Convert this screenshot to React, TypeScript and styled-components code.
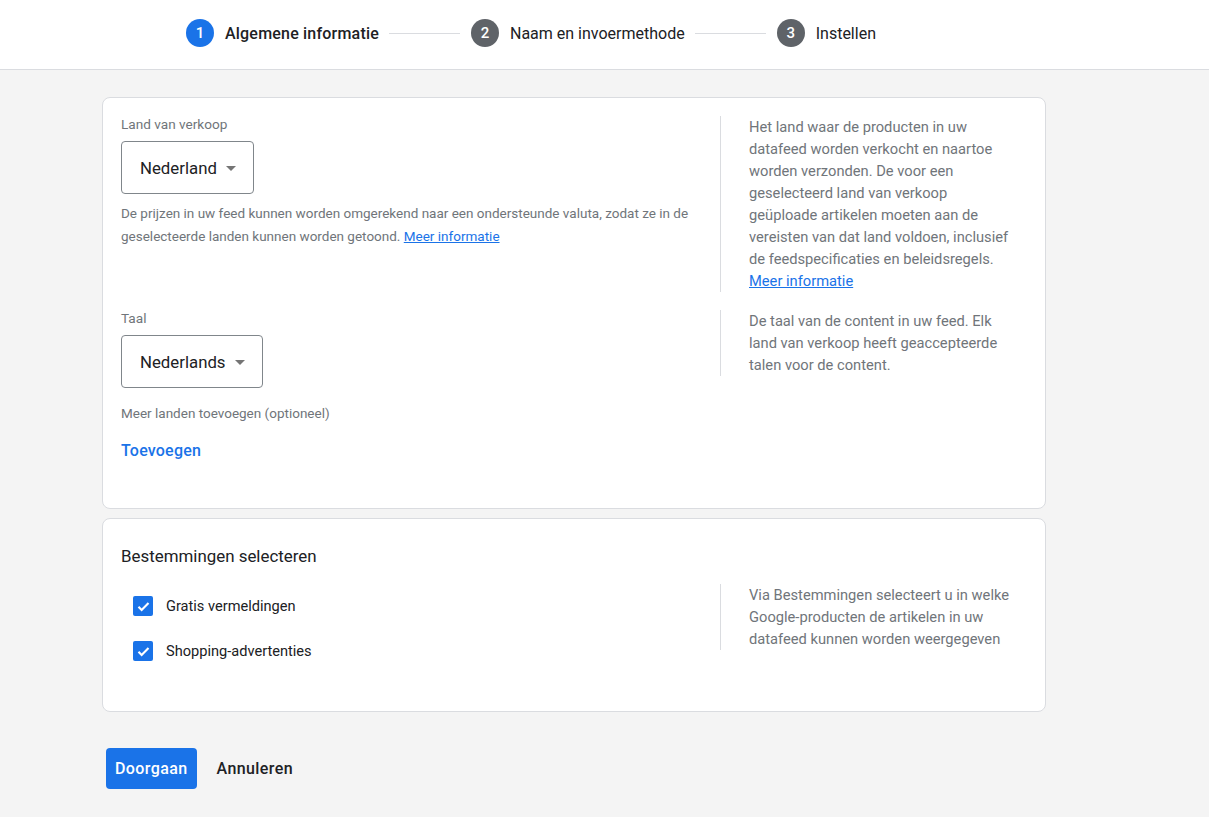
import React from "react";
import styled, { createGlobalStyle } from "styled-components";

const GlobalStyle = createGlobalStyle`
  html, body { margin: 0; padding: 0; }
  body {
    background: #f4f4f4;
    font-family: Roboto, "Noto Sans", Arial, sans-serif;
    color: #202124;
    -webkit-font-smoothing: antialiased;
  }
`;

const Page = styled.div`
  min-height: 817px;
  background: #f4f4f4;
`;

const Header = styled.header`
  height: 70px;
  background: #fff;
  border-bottom: 1px solid #dadce0;
  display: flex;
  align-items: center;
  padding-left: 186px;
  box-sizing: border-box;
  padding-bottom: 3px;
`;

const Step = styled.div`
  display: flex;
  align-items: center;
  gap: 11px;
`;

const StepCircle = styled.div<{ $active?: boolean }>`
  width: 28px;
  height: 28px;
  border-radius: 50%;
  background: ${(p) => (p.$active ? "#1a73e8" : "#5f6368")};
  color: #fff;
  font-size: 15px;
  font-weight: 500;
  display: flex;
  align-items: center;
  justify-content: center;
`;

const StepLabel = styled.span<{ $active?: boolean }>`
  font-size: 16px;
  font-weight: ${(p) => (p.$active ? 500 : 400)};
  color: #202124;
  letter-spacing: ${(p) => (p.$active ? "0.2px" : "0")};
`;

const StepLine = styled.div`
  width: 71px;
  height: 1px;
  background: #dadce0;
  margin: 0 11px 0 10px;
`;

const Main = styled.main`
  padding: 27px 0 0 102px;
  width: 944px;
`;

const Card = styled.section<{ $pb: number; $pt: number }>`
  background: #fff;
  border: 1px solid #dadce0;
  border-radius: 8px;
  padding: ${(p) => p.$pt}px 19px ${(p) => p.$pb}px 18px;
  margin-bottom: 9px;
`;

const Row = styled.div<{ $mt?: number }>`
  display: grid;
  grid-template-columns: 1fr 306px;
  column-gap: 21px;
  margin-top: ${(p) => p.$mt ?? 0}px;
`;

const Left = styled.div<{ $pt?: number }>`
  display: flex;
  flex-direction: column;
  align-items: flex-start;
  padding-top: ${(p) => p.$pt ?? 0}px;
`;

const Aside = styled.div<{ $mt?: number }>`
  border-left: 1px solid #dadce0;
  padding-left: 28px;
  padding-right: 10px;
  margin-top: ${(p) => p.$mt ?? 0}px;
  font-size: 14.7px;
  line-height: 22px;
  color: #70757a;
  align-self: start;
`;

const FieldLabel = styled.div`
  font-size: 13.6px;
  line-height: 20px;
  color: #70757a;
`;

const SelectBox = styled.div`
  margin-top: 7px;
  height: 53px;
  box-sizing: border-box;
  border: 1px solid #80868b;
  border-radius: 4px;
  display: flex;
  align-items: center;
  padding: 0 17px 0 18px;
  gap: 9px;
  font-size: 16.8px;
  color: #202124;
  background: #fff;
`;

const Caret = styled.span`
  width: 0;
  height: 0;
  border-left: 5px solid transparent;
  border-right: 5px solid transparent;
  border-top: 5px solid #757575;
  margin-top: 1px;
`;

const Helper = styled.p<{ $mt: number }>`
  margin: ${(p) => p.$mt}px 0 0;
  font-size: 13.5px;
  line-height: 23px;
  color: #70757a;
`;

const Link = styled.a`
  color: #1a73e8;
  text-decoration: underline;
`;

const AddLink = styled.div`
  margin-top: 16px;
  font-size: 16px;
  line-height: 20px;
  font-weight: 500;
  color: #1a73e8;
  letter-spacing: 0.2px;
`;

const SectionTitle = styled.h2`
  margin: 0;
  font-size: 16.9px;
  font-weight: 400;
  line-height: 22px;
  color: #202124;
`;

const CheckRow = styled.label`
  display: flex;
  align-items: center;
  gap: 13px;
  padding-left: 12px;
  height: 22px;
  font-size: 14.6px;
  color: #202124;
  & + & {
    margin-top: 23px;
  }
`;

const CheckBox = styled.span`
  width: 20px;
  height: 20px;
  border-radius: 2px;
  background: #1a73e8;
  display: flex;
  align-items: center;
  justify-content: center;
`;

const Actions = styled.div`
  display: flex;
  align-items: center;
  gap: 20px;
  padding: 27px 0 0 4px;
`;

const PrimaryButton = styled.button`
  height: 41px;
  padding: 0 9px;
  border: none;
  border-radius: 4px;
  background: #1a73e8;
  color: #fff;
  font-family: Roboto, Arial, sans-serif;
  font-size: 16px;
  font-weight: 500;
  letter-spacing: 0.4px;
`;

const TextButton = styled.button`
  background: none;
  border: none;
  padding: 0;
  font-family: Roboto, Arial, sans-serif;
  font-size: 16px;
  font-weight: 500;
  color: #202124;
  letter-spacing: 0.4px;
`;

const Check = () => (
  <CheckBox>
    <svg width="15" height="15" viewBox="0 0 24 24">
      <path d="M4 12.5l5 5L20 6.5" fill="none" stroke="#fff" strokeWidth="3.4" />
    </svg>
  </CheckBox>
);

export default function App() {
  return (
    <Page>
      <GlobalStyle />
      <Header>
        <Step>
          <StepCircle $active>1</StepCircle>
          <StepLabel $active>Algemene informatie</StepLabel>
        </Step>
        <StepLine />
        <Step>
          <StepCircle>2</StepCircle>
          <StepLabel>Naam en invoermethode</StepLabel>
        </Step>
        <StepLine />
        <Step>
          <StepCircle>3</StepCircle>
          <StepLabel>Instellen</StepLabel>
        </Step>
      </Header>
      <Main>
        <Card $pt={16} $pb={47}>
          <Row>
            <Left>
              <FieldLabel>Land van verkoop</FieldLabel>
              <SelectBox>
                Nederland <Caret />
              </SelectBox>
              <Helper $mt={8}>
                De prijzen in uw feed kunnen worden omgerekend naar een ondersteunde valuta, zodat ze in de
                <br />
                geselecteerde landen kunnen worden getoond. <Link>Meer informatie</Link>
              </Helper>
            </Left>
            <Aside $mt={2}>
              Het land waar de producten in uw datafeed worden verkocht en naartoe worden verzonden. De voor een
              geselecteerd land van verkoop geüploade artikelen moeten aan de vereisten van dat land voldoen,
              inclusief de feedspecificaties en beleidsregels.
              <br />
              <Link>Meer informatie</Link>
            </Aside>
          </Row>
          <Row $mt={16}>
            <Left>
              <FieldLabel>Taal</FieldLabel>
              <SelectBox>
                Nederlands <Caret />
              </SelectBox>
              <Helper $mt={14}>Meer landen toevoegen (optioneel)</Helper>
              <AddLink>Toevoegen</AddLink>
            </Left>
            <Aside $mt={2}>
              De taal van de content in uw feed. Elk land van verkoop heeft geaccepteerde talen voor de content.
            </Aside>
          </Row>
        </Card>
        <Card $pt={26} $pb={49}>
          <SectionTitle>Bestemmingen selecteren</SectionTitle>
          <Row $mt={17}>
            <Left $pt={11}>
              <CheckRow>
                <Check />
                Gratis vermeldingen
              </CheckRow>
              <CheckRow>
                <Check />
                Shopping-advertenties
              </CheckRow>
            </Left>
            <Aside>
              Via Bestemmingen selecteert u in welke Google-producten de artikelen in uw datafeed kunnen worden
              weergegeven
            </Aside>
          </Row>
        </Card>
        <Actions>
          <PrimaryButton>Doorgaan</PrimaryButton>
          <TextButton>Annuleren</TextButton>
        </Actions>
      </Main>
    </Page>
  );
}
